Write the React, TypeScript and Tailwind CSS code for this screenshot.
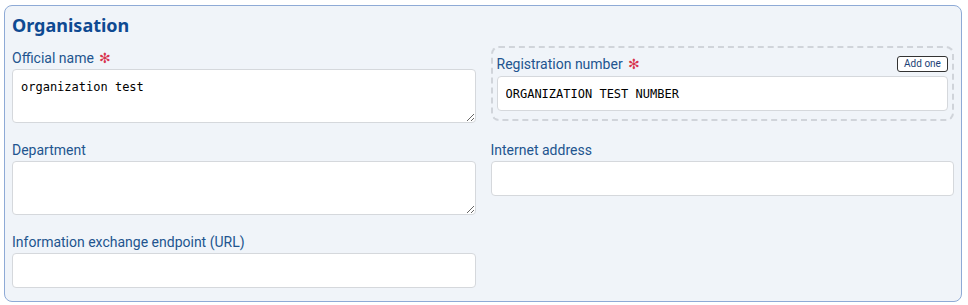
import React from "react";

const labelCls = "block text-[14px] leading-[16px] text-[#22548f] font-['Roboto','Noto_Sans',sans-serif]";
const box =
  "block w-full bg-white border border-[#d5d8dc] rounded-[4px] px-[8px] text-[12px] text-black outline-none font-['DejaVu_Sans_Mono',monospace]";

function Req() {
  return <span className="ml-[5px] text-[#d8344f] text-[14px]">✻</span>;
}

function Field({ name, children }: { name: string; children: React.ReactNode }) {
  return (
    <div>
      <label className={`${labelCls} mb-[3px]`}>{name}</label>
      {children}
    </div>
  );
}

export default function App() {
  return (
    <div className="bg-white min-h-[305px] pt-[5px] pl-[4px] pr-[6px] font-['Noto_Sans',sans-serif]">
      <section className="bg-[#f0f4f9] border border-[#8eaad6] rounded-[8px] px-[7px] pt-[5px] pb-[13px]">
        <h2 className="text-[18px] leading-[28px] font-bold text-[#0e4a92] mb-[7px]">Organisation</h2>

        <div className="grid grid-cols-2 gap-x-[15px] gap-y-[19px] items-start">
          <div className="pt-[4px]">
            <label className={`${labelCls} mb-[3px]`}>
              Official name
              <Req />
            </label>
            <textarea readOnly value="organization test" className={`${box} h-[54px] pt-[9px] leading-[16px]`} />
          </div>

          <div className="border-2 border-dashed border-[#d0d4da] rounded-[8px] px-[4px] pt-[6px] pb-[8px]">
            <div className="flex items-center justify-between h-[20px] mb-[2px]">
              <label className="text-[14px] leading-[16px] text-[#22548f] font-['Roboto','Noto_Sans',sans-serif]">
                Registration number
                <Req />
              </label>
              <button className="h-[16px] w-[51px] bg-white border border-[#333] rounded-[3px] text-[10px] leading-[14px] text-[#1c3f75] font-['Roboto',sans-serif]">
                Add one
              </button>
            </div>
            <input readOnly value="ORGANIZATION TEST NUMBER" className={`${box} h-[35px]`} />
          </div>

          <Field name="Department">
            <textarea readOnly className={`${box} h-[54px] pt-[9px] leading-[16px]`} />
          </Field>

          <Field name="Internet address">
            <input readOnly className={`${box} h-[35px]`} />
          </Field>

          <Field name="Information exchange endpoint (URL)">
            <input readOnly className={`${box} h-[35px]`} />
          </Field>
        </div>
      </section>
    </div>
  );
}
